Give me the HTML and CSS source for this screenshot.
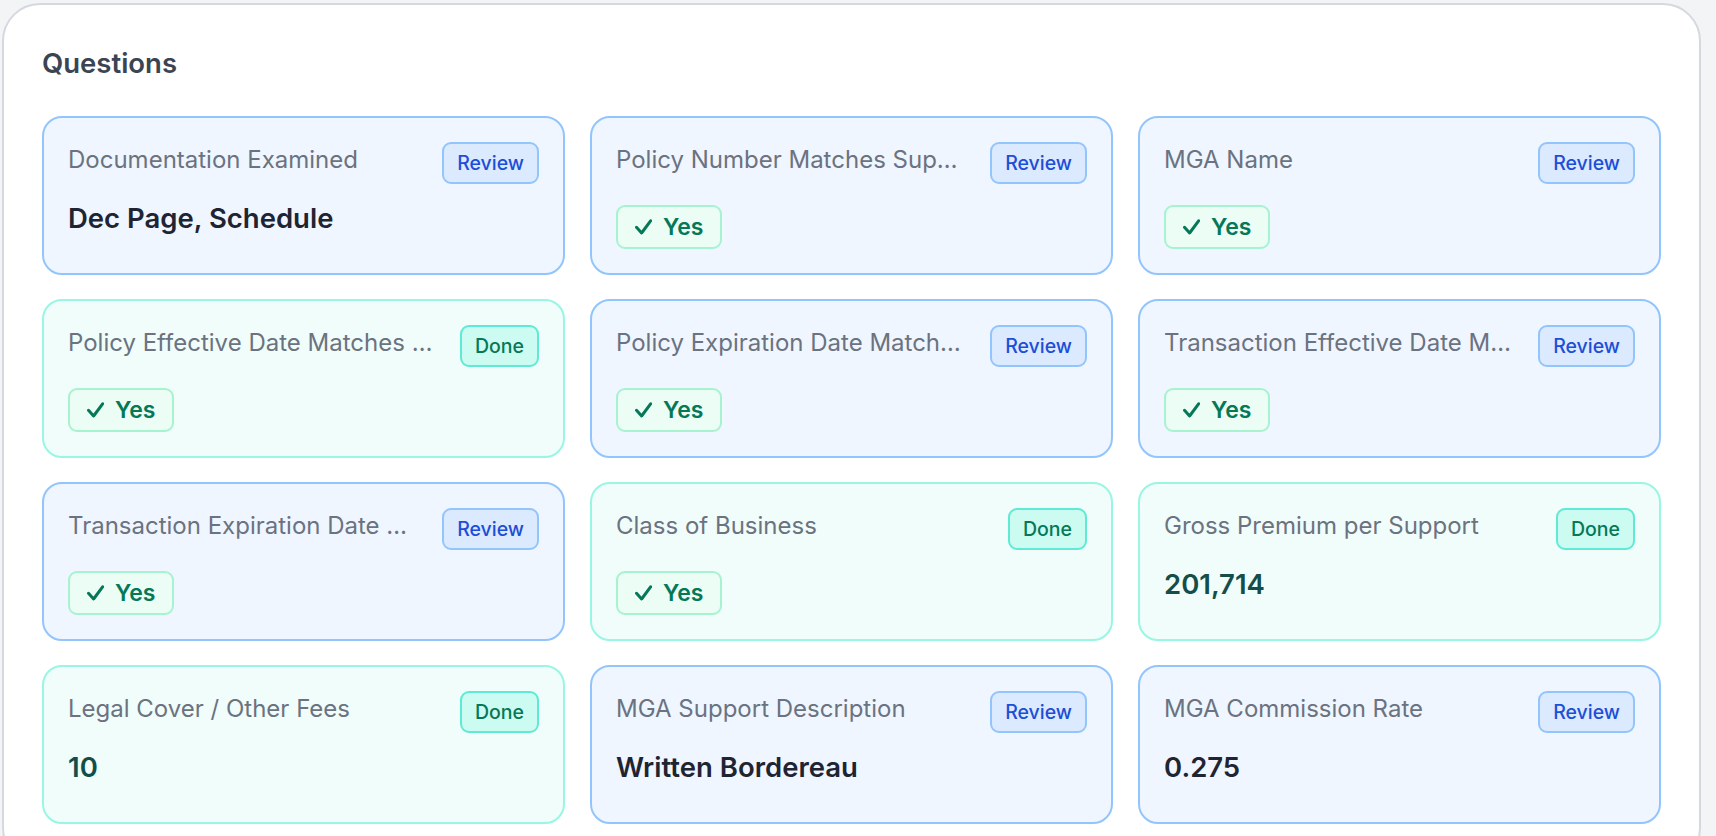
FILE: index.html
```html
<!DOCTYPE html>
<html lang="en">
<head>
<meta charset="UTF-8">
<meta name="viewport" content="width=device-width, initial-scale=1.0">
<title>Questions</title>
<link rel="stylesheet" href="styles.css">
</head>
<body>

<div class="page">
    <section class="panel">
        <h2 class="panel-title">Questions</h2>

        <div class="question-grid">
            <div class="question-card is-review">
                <div class="question-head">
                    <span class="question-label">Documentation Examined</span>
                    <span class="status-badge">Review</span>
                </div>
                <div class="question-body"><span class="answer-text">Dec Page, Schedule</span></div>
            </div>

            <div class="question-card is-review">
                <div class="question-head">
                    <span class="question-label">Policy Number Matches Support</span>
                    <span class="status-badge">Review</span>
                </div>
                <div class="question-body">
                    <span class="answer-pill"><svg class="check" viewBox="0 0 17 16"><path d="M1.5 8.3 L6.6 14 L15.6 1.8"/></svg>Yes</span>
                </div>
            </div>

            <div class="question-card is-review">
                <div class="question-head">
                    <span class="question-label">MGA Name</span>
                    <span class="status-badge">Review</span>
                </div>
                <div class="question-body">
                    <span class="answer-pill"><svg class="check" viewBox="0 0 17 16"><path d="M1.5 8.3 L6.6 14 L15.6 1.8"/></svg>Yes</span>
                </div>
            </div>

            <div class="question-card is-done">
                <div class="question-head">
                    <span class="question-label">Policy Effective Date Matches Support</span>
                    <span class="status-badge">Done</span>
                </div>
                <div class="question-body">
                    <span class="answer-pill"><svg class="check" viewBox="0 0 17 16"><path d="M1.5 8.3 L6.6 14 L15.6 1.8"/></svg>Yes</span>
                </div>
            </div>

            <div class="question-card is-review">
                <div class="question-head">
                    <span class="question-label">Policy Expiration Date Matches Support</span>
                    <span class="status-badge">Review</span>
                </div>
                <div class="question-body">
                    <span class="answer-pill"><svg class="check" viewBox="0 0 17 16"><path d="M1.5 8.3 L6.6 14 L15.6 1.8"/></svg>Yes</span>
                </div>
            </div>

            <div class="question-card is-review">
                <div class="question-head">
                    <span class="question-label">Transaction Effective Date Matches Support</span>
                    <span class="status-badge">Review</span>
                </div>
                <div class="question-body">
                    <span class="answer-pill"><svg class="check" viewBox="0 0 17 16"><path d="M1.5 8.3 L6.6 14 L15.6 1.8"/></svg>Yes</span>
                </div>
            </div>

            <div class="question-card is-review">
                <div class="question-head">
                    <span class="question-label">Transaction Expiration Date Matches Support</span>
                    <span class="status-badge">Review</span>
                </div>
                <div class="question-body">
                    <span class="answer-pill"><svg class="check" viewBox="0 0 17 16"><path d="M1.5 8.3 L6.6 14 L15.6 1.8"/></svg>Yes</span>
                </div>
            </div>

            <div class="question-card is-done">
                <div class="question-head">
                    <span class="question-label">Class of Business</span>
                    <span class="status-badge">Done</span>
                </div>
                <div class="question-body">
                    <span class="answer-pill"><svg class="check" viewBox="0 0 17 16"><path d="M1.5 8.3 L6.6 14 L15.6 1.8"/></svg>Yes</span>
                </div>
            </div>

            <div class="question-card is-done">
                <div class="question-head">
                    <span class="question-label">Gross Premium per Support</span>
                    <span class="status-badge">Done</span>
                </div>
                <div class="question-body"><span class="answer-text">201,714</span></div>
            </div>

            <div class="question-card is-done">
                <div class="question-head">
                    <span class="question-label">Legal Cover / Other Fees</span>
                    <span class="status-badge">Done</span>
                </div>
                <div class="question-body"><span class="answer-text">10</span></div>
            </div>

            <div class="question-card is-review">
                <div class="question-head">
                    <span class="question-label">MGA Support Description</span>
                    <span class="status-badge">Review</span>
                </div>
                <div class="question-body"><span class="answer-text">Written Bordereau</span></div>
            </div>

            <div class="question-card is-review">
                <div class="question-head">
                    <span class="question-label">MGA Commission Rate</span>
                    <span class="status-badge">Review</span>
                </div>
                <div class="question-body"><span class="answer-text">0.275</span></div>
            </div>
        </div>
    </section>
</div>

</body>
</html>
```

FILE: styles.css
```css
body {
    margin: 0;
    background: #f3f4f6;
    font-family: Inter, "Noto Sans", "Liberation Sans", sans-serif;
}

.page {
    padding: 3px 15px 0 2px;
}

.panel {
    background: #ffffff;
    border: 2px solid #d5d9df;
    border-radius: 38px;
    padding: 38px 38px 40px;
}

.panel-title {
    margin: 0 0 33px;
    font-size: 27.5px;
    line-height: 40px;
    font-weight: 600;
    color: #3b4453;
}

.question-grid {
    display: grid;
    grid-template-columns: repeat(3, minmax(0, 1fr));
    gap: 24px 25px;
}

/* carte de question */
.question-card {
    border: 2px solid;
    border-radius: 20px;
    padding: 24px;
    min-width: 0;
}

.question-card.is-review {
    background: #eff6ff;
    border-color: #93c5fd;
}

.question-card.is-done {
    background: #f0fdfa;
    border-color: #99f6e4;
}

.question-head {
    display: flex;
    align-items: flex-start;
    justify-content: space-between;
    gap: 22px;
    margin-bottom: 21px;
}

.question-label {
    min-width: 0;
    font-size: 24px;
    line-height: 36px;
    color: #6b7280;
    white-space: nowrap;
    overflow: hidden;
    text-overflow: ellipsis;
}

.status-badge {
    flex-shrink: 0;
    font-size: 19.5px;
    line-height: 26px;
    font-weight: 500;
    padding: 6px 13px;
    border: 2px solid;
    border-radius: 9px;
}

.is-review .status-badge {
    background: #dbeafe;
    border-color: #93c5fd;
    color: #1d4ed8;
}

.is-done .status-badge {
    background: #ccfbf1;
    border-color: #5eead4;
    color: #047857;
}

.question-body {
    min-height: 44px;
}

.answer-text {
    display: block;
    font-size: 27.5px;
    line-height: 1;
    font-weight: 600;
    color: #1f2433;
}

.is-done .answer-text {
    color: #134e4a;
}

/* pastille Oui */
.answer-pill {
    display: inline-flex;
    align-items: center;
    gap: 11px;
    padding: 5px 17px;
    border: 2px solid #a7f3d0;
    border-radius: 9px;
    background: #ecfdf5;
    color: #047857;
    font-size: 23px;
    line-height: 30px;
    font-weight: 600;
}

.check {
    width: 17px;
    height: 16px;
    fill: none;
    stroke: currentColor;
    stroke-width: 3;
    stroke-linecap: round;
    stroke-linejoin: round;
}
```
